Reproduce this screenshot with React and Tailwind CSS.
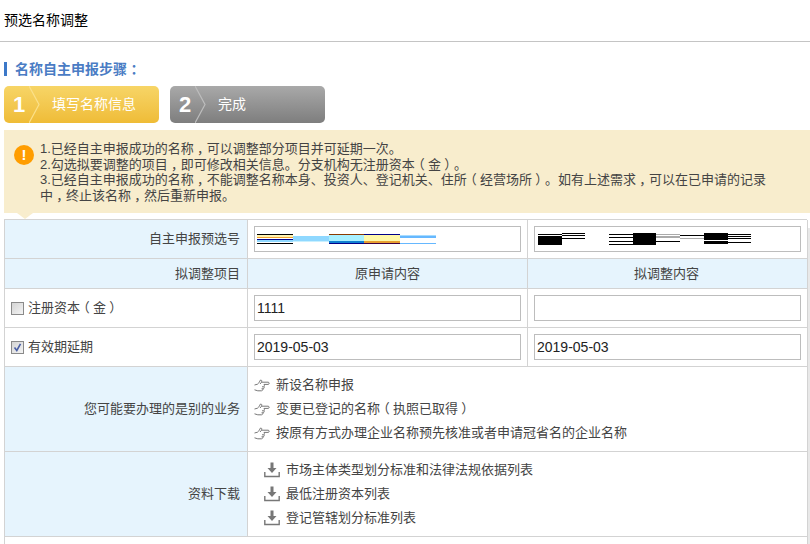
const FONT = "font-['Liberation_Sans','Noto_Sans_CJK_SC',sans-serif]";

// the reference's font centres these marks in their cell: halve the glyph, then pad it back out
const PUNCT_CLASS = "inline-block px-[0.25em] [font-feature-settings:'halt']";

const T = ({ children }) =>
  children.split(/([，（）：])/).map((s, i) =>
    /^[，（）：]$/.test(s) ? <span key={i} className={PUNCT_CLASS}>{s}</span> : s
  );

const Hand = () => (
  <svg width="16" height="13" viewBox="0 0 16 13" fill="none" stroke="#777" strokeWidth="1" className="shrink-0">
    <path d="M0.5 6 L3.5 5.2 C5 4.2 5.5 2.5 6.5 1 C7.7 0.6 8 2 7.5 3.2 L14.2 3.2 C15.5 3.4 15.5 5.3 14.2 5.4 L10 5.4 C10.5 6.2 10.5 7.2 10 7.8 C10.5 8.4 10 9.8 9 9.8 C9 10.8 8.5 11.8 7.5 11.8 L3.8 11.8 L0.5 10.8" />
    <path d="M7.5 3.2 L6 5 M9.8 7.8 L8 7.8 M9 9.8 L7.5 9.8" />
  </svg>
);

const DownloadIcon = () => (
  <svg width="16" height="16" viewBox="0 0 16 16" className="shrink-0">
    <path d="M6.5 0.5 H9.5 V6 H12.5 L8 11 L3.5 6 H6.5 Z" fill="#777" />
    <path d="M0.8 10 V14.5 H15.2 V10" fill="none" stroke="#777" strokeWidth="1.4" />
  </svg>
);

const Check = ({ checked }) => (
  <span className="w-[13px] h-[13px] shrink-0 border border-[#8a8a8a] bg-gradient-to-br from-[#d4d4d4] to-[#f4f4f4] flex items-center justify-center">
    {checked && (
      <svg width="11" height="11" viewBox="0 0 11 11" fill="none">
        <path d="M2.5 5.5 L4.8 8.5 L8.5 1.8" stroke="#4a5fa5" strokeWidth="1.6" />
      </svg>
    )}
  </span>
);

const Field = ({ children }) => (
  <div className="h-[26px] border border-[#bdbdbd] bg-white px-[2px] flex items-center text-[14px] text-[#222] overflow-hidden">
    {children}
  </div>
);

const Step = ({ n, label, active }) => (
  <div className={`w-[155px] h-[37px] rounded-[5px] flex items-center text-white bg-gradient-to-b ${active ? 'from-[#f7d566] to-[#efbc36]' : 'from-[#a9a9a9] to-[#7e7e7e]'}`}>
    <span className="w-[25px] pl-[9px] text-[22px] font-bold leading-none">{n}</span>
    <svg width="12" height="37" viewBox="0 0 12 37" fill="none" className="shrink-0">
      <path d="M0 0 L10 18.5 L0 37" stroke={active ? '#fbe08a' : '#bdbdbd'} strokeWidth="1.2" />
    </svg>
    <span className="ml-[11px] text-[14px]">{label}</span>
  </div>
);

const Label = ({ children, className = '' }) => (
  <div className={`bg-[#e6f4fd] border-r border-b border-[#d3d3d3] flex items-center ${className || 'justify-end pr-[7px]'}`}>{children}</div>
);

const Cell = ({ children, className = 'px-[6px] flex-col justify-center' }) => (
  <div className={`border-r border-b border-[#d3d3d3] flex ${className}`}>{children}</div>
);

const lines = (rows) => rows.map(([x, y, w, h, c], i) => <rect key={i} x={x} y={y} width={w} height={h} fill={c} />);

const BLOB_A = [
  [0, 0, 36, 1, '#000'], [0, 1, 36, 2, '#fff3b0'], [0, 3, 36, 1, '#f0a030'], [0, 5, 36, 1, '#00008b'], [0, 6, 36, 2, '#8fd8ff'], [0, 9, 36, 1, '#000'],
  [36, 2, 36, 5, '#8fd8ff'], [36, 7, 36, 1, '#c8f0ff'],
  [72, 0, 35, 1, '#8b3a00'], [72, 1, 35, 6, '#a8f0ff'], [72, 7, 35, 2, '#1080d0'], [72, 9, 35, 1, '#00008b'],
  [107, 0, 36, 1, '#00008b'], [107, 1, 36, 6, '#fff8a8'], [107, 7, 36, 2, '#e8a030'], [107, 9, 36, 1, '#400040'],
  [143, 1, 36, 1, '#a8dcff'], [143, 2, 36, 2, '#66b8ff'], [143, 9, 36, 1, '#66b8ff'],
];

const BLOB_B = [
  [0, 1, 24, 1, '#000'], [0, 3, 24, 9, '#000'],
  [24, 0, 23, 1, '#000'], [24, 2, 23, 1, '#000'], [24, 5, 23, 1, '#000'],
  [71, 1, 24, 1, '#000'], [71, 4, 24, 1, '#000'], [71, 8, 24, 1, '#000'], [71, 11, 24, 1, '#000'],
  [95, 0, 23, 12, '#000'],
  [118, 1, 24, 1, '#aaa'], [118, 3, 24, 2, '#aaa'], [118, 8, 24, 1, '#000'],
  [142, 2, 24, 1, '#000'], [142, 5, 24, 1, '#aaa'],
  [166, 0, 24, 7, '#000'], [166, 8, 24, 3, '#000'],
  [190, 1, 23, 1, '#000'], [190, 3, 23, 1, '#000'], [190, 5, 23, 1, '#000'], [190, 9, 23, 1, '#000'],
];

export default function App() {
  return (
    <div className={`${FONT} w-[810px] h-[544px] overflow-hidden bg-white text-[13px] text-[#444]`}>
      <div className="h-[42px] border-b border-[#c4c4c4] pl-[4px] flex items-center text-[14px] text-[#000]">预选名称调整</div>

      <div className="mt-[20px] ml-[4px] h-[14px] border-l-[3px] border-[#3c78c8] pl-[8px] flex items-center text-[14px] font-bold text-[#4a7cc4]">
        <span><T>名称自主申报步骤：</T></span>
      </div>

      <div className="mt-[10px] ml-[4px] flex gap-[11px]">
        <Step n="1" label="填写名称信息" active />
        <Step n="2" label="完成" />
      </div>

      <div className="relative mt-[7px] ml-[4px] h-[83px] bg-[#f8edcd] pl-[36px] pr-[40px] pt-[11px] leading-[15.6px]">
        <span className="absolute left-[10px] top-[15px] w-[20px] h-[20px] rounded-full bg-[#ff9d00] text-white text-[15px] font-bold flex items-center justify-center">!</span>
        <p><T>1.已经自主申报成功的名称，可以调整部分项目并可延期一次。</T></p>
        <p><T>2.勾选拟要调整的项目，即可修改相关信息。分支机构无注册资本（金）。</T></p>
        <p><T>3.已经自主申报成功的名称，不能调整名称本身、投资人、登记机关、住所（经营场所）。如有上述需求，可以在已申请的记录中，终止该名称，然后重新申报。</T></p>
        <span className="absolute left-[13px] top-full border-x-[8px] border-x-transparent border-t-[6px] border-t-[#f8edcd]" />
      </div>

      <div className="mt-[6px] ml-[4px] flex gap-[1px]">
        <div className="w-[803px] grid grid-cols-[243px_280px_280px] grid-rows-[39px_30px_39px_39px_85px_85px_20px] border-l border-t border-[#d3d3d3]">
          <Label>自主申报预选号</Label>
          <Cell>
            <Field>
              <svg width="180" height="10" viewBox="0 0 180 10">{lines(BLOB_A)}</svg>
            </Field>
          </Cell>
          <Cell>
            <Field>
              <svg width="214" height="12" viewBox="0 0 214 12" className="ml-[1px]">{lines(BLOB_B)}</svg>
            </Field>
          </Cell>

          <Label>拟调整项目</Label>
          <Label className="justify-center">原申请内容</Label>
          <Label className="justify-center pr-[2px]">拟调整内容</Label>

          <Cell className="px-[6px] items-center gap-[4px]"><Check /><span><T>注册资本（金）</T></span></Cell>
          <Cell><Field>1111</Field></Cell>
          <Cell><Field /></Cell>

          <Cell className="px-[6px] items-center gap-[4px]"><Check checked />有效期延期</Cell>
          <Cell><Field>2019-05-03</Field></Cell>
          <Cell><Field>2019-05-03</Field></Cell>

          <Label>您可能要办理的是别的业务</Label>
          <div className="col-span-2 border-r border-b border-[#d3d3d3] px-[6px] flex flex-col justify-center gap-[7px]">
            {['新设名称申报', '变更已登记的名称（执照已取得）', '按原有方式办理企业名称预先核准或者申请冠省名的企业名称'].map((t) => (
              <div key={t} className="flex items-center gap-[6px] h-[17px]">
                <Hand />
                <span><T>{t}</T></span>
              </div>
            ))}
          </div>

          <Label>资料下载</Label>
          <div className="col-span-2 border-r border-b border-[#d3d3d3] pl-[16px] pr-[6px] flex flex-col justify-center gap-[7px]">
            {['市场主体类型划分标准和法律法规依据列表', '最低注册资本列表', '登记管辖划分标准列表'].map((t) => (
              <div key={t} className="flex items-center gap-[6px] h-[17px]"><DownloadIcon />{t}</div>
            ))}
          </div>

          <div className="col-span-3 border-r border-[#d3d3d3]" />
        </div>
        <div className="mt-[9px] w-[2px] h-[316px] bg-[#e8e8e8]" />
      </div>
    </div>
  );
}
